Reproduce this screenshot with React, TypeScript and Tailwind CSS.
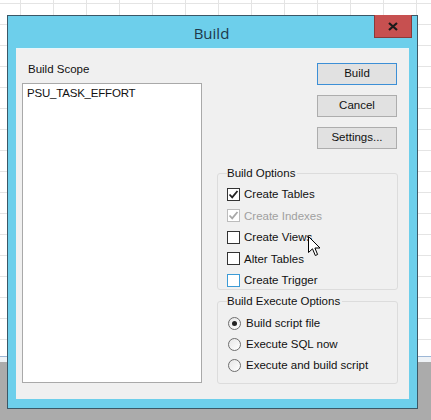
import React from "react";

const font = { fontFamily: '"Liberation Sans", Arial, sans-serif' };

function CheckBox({ checked, disabled, focus }: { checked?: boolean; disabled?: boolean; focus?: boolean }) {
  const border = focus ? "border-[#3c9bd6]" : disabled ? "border-[#bcbcbc]" : "border-[#333333]";
  return (
    <span className={`w-[13px] h-[13px] border ${border} bg-white flex items-center justify-center shrink-0`}>
      {checked && (
        <svg width="11" height="11" viewBox="0 0 11 11">
          <path d="M1.5 5.5 L4.2 8.3 L9.5 2" fill="none" stroke={disabled ? "#a8a8a8" : "#222"} strokeWidth="1.8" />
        </svg>
      )}
    </span>
  );
}

function Radio({ checked }: { checked?: boolean }) {
  return (
    <span className="w-[13px] h-[13px] rounded-full border border-[#6e6e6e] bg-[linear-gradient(to_bottom_right,#e6e6e6,#ffffff)] flex items-center justify-center shrink-0">
      {checked && <span className="w-[5px] h-[5px] rounded-full bg-[#222]" />}
    </span>
  );
}

function Btn({ label, def }: { label: string; def?: boolean }) {
  return (
    <div
      className={`w-[80px] h-[22px] flex items-center justify-center text-[11.5px] text-[#111] bg-[#e1e1e1] border ${
        def ? "border-[#3c8fd6]" : "border-[#adadad]"
      }`}
    >
      {label}
    </div>
  );
}

export default function App() {
  return (
    <div className="relative w-[431px] h-[420px] overflow-hidden bg-white" style={font}>
      {/* spreadsheet background */}
      <div className="h-[356px] bg-white bg-[linear-gradient(to_right,#e4e4e4_1px,transparent_1px),linear-gradient(to_bottom,#e4e4e4_1px,transparent_1px)] bg-[size:33px_21px] bg-[position:20px_3px]" />
      <div className="h-[1px] bg-[#9db7d6]" />
      <div className="h-[5px] bg-[#eef2f6]" />
      <div className="h-[58px] bg-[#ababab]" />

      {/* window */}
      <div className="absolute left-[7px] top-[15px] w-[411px] h-[394px] border border-[#3b5766] bg-[#6dcfeb] flex flex-col">
        <div className="h-[32px] relative flex items-center justify-center">
          <span className="text-[15px] text-[#20384a] mt-[2px] -ml-[2px]" style={{ fontFamily: '"Open Sans", "Noto Sans", sans-serif' }}>
            Build
          </span>
          <div className="absolute right-[5px] top-[-1px] w-[38px] h-[23px] bg-[#c75050] border border-[#8a3a3a] border-t-0 flex items-center justify-center">
            <svg width="10" height="9" viewBox="0 0 10 9">
              <path d="M1 1 L9 8 M9 1 L1 8" stroke="#1a1a1a" strokeWidth="2.2" />
            </svg>
          </div>
        </div>
        <div className="mx-[8px] mb-[9px] flex-1 bg-[#f0f0f0] border-t border-[#e6f6fb] flex px-[6px]">
          {/* left column */}
          <div className="w-[180px] flex flex-col">
            <div className="text-[11.5px] text-[#111] mt-[13px] ml-[6px] h-[14px] leading-[14px]">Build Scope</div>
            <div className="mt-[7px] h-[300px] border border-[#a9a9a9] bg-white px-[4px] pt-[2px]">
              <div className="text-[11.5px] text-[#111] leading-[14px] tracking-[-0.2px]">PSU_TASK_EFFORT</div>
            </div>
          </div>
          {/* right column */}
          <div className="flex-1 flex flex-col pl-[15px] pr-[5px]">
            <div className="flex flex-col items-end gap-[10px] mt-[14px] mr-[1px]">
              <Btn label="Build" def />
              <Btn label="Cancel" />
              <Btn label="Settings..." />
            </div>
            {/* Build options */}
            <div className="relative mt-[24px] h-[117px] border border-[#dcdcdc] rounded-[3px]">
              <span className="absolute left-[9px] top-[-8px] bg-[#f0f0f0] pr-[2px] text-[11.5px] leading-[14px] text-[#111]">Build Options</span>
              <div className="flex flex-col pl-[9px] pt-[13px] gap-[7.5px] text-[11.5px] leading-[14px]">
                <div className="flex items-center gap-[4px] text-[#111]"><CheckBox checked />Create Tables</div>
                <div className="flex items-center gap-[4px] text-[#a0a0a0]"><CheckBox checked disabled />Create Indexes</div>
                <div className="flex items-center gap-[4px] text-[#111]"><CheckBox />Create Views</div>
                <div className="flex items-center gap-[4px] text-[#111]"><CheckBox />Alter Tables</div>
                <div className="flex items-center gap-[4px] text-[#111]"><CheckBox focus />Create Trigger</div>
              </div>
            </div>
            {/* Build execute options */}
            <div className="relative mt-[11px] h-[83px] border border-[#dcdcdc] rounded-[3px]">
              <span className="absolute left-[9px] top-[-8px] bg-[#f0f0f0] pr-[2px] text-[11.5px] leading-[14px] text-[#111]">Build Execute Options</span>
              <div className="flex flex-col pl-[10px] pt-[14px] gap-[7px] text-[11.5px] leading-[14px] text-[#111]">
                <div className="flex items-center gap-[5px]"><Radio checked />Build script file</div>
                <div className="flex items-center gap-[5px]"><Radio />Execute SQL now</div>
                <div className="flex items-center gap-[5px]"><Radio />Execute and build script</div>
              </div>
            </div>
          </div>
        </div>
      </div>

      {/* mouse cursor */}
      <svg className="absolute left-[308px] top-[236px]" width="14" height="22" viewBox="0 0 14 22">
        <path d="M0.5 0.5 L0.5 16.5 L4.5 12.8 L7.3 19.5 L9.6 18.5 L6.9 12 L12 12 Z" fill="#fff" stroke="#000" strokeWidth="1" />
      </svg>
    </div>
  );
}
